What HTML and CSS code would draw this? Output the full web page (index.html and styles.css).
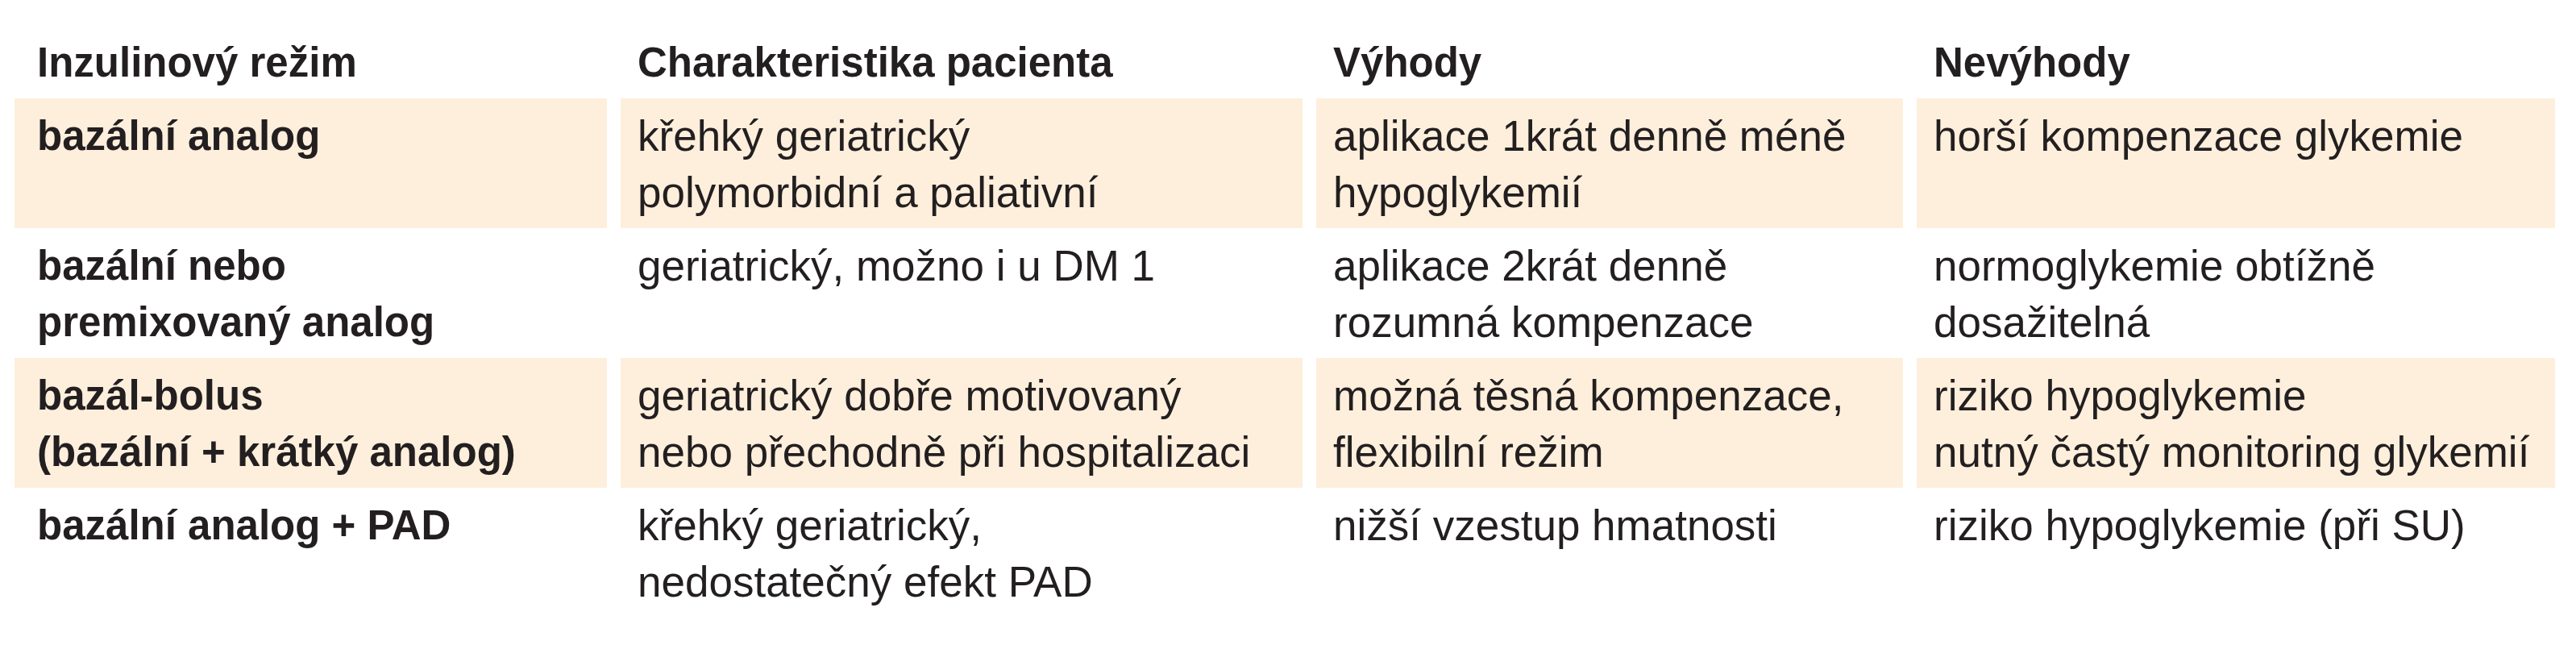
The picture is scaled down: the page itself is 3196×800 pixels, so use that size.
FILE: index.html
```html
<!DOCTYPE html>
<html lang="cs">
<head>
<meta charset="utf-8">
<title>Inzulinové režimy</title>
<link rel="stylesheet" href="styles.css">
</head>
<body>
<table class="regimes">
  <colgroup>
    <col class="c1"><col class="c2"><col class="c3"><col class="c4">
  </colgroup>
  <thead>
    <tr>
      <th class="first">Inzulinový režim</th>
      <th>Charakteristika pacienta</th>
      <th>Výhody</th>
      <th>Nevýhody</th>
    </tr>
  </thead>
  <tbody>
    <tr class="hl">
      <td class="first">bazální analog</td>
      <td>křehký geriatrický<br>polymorbidní a paliativní</td>
      <td>aplikace 1krát denně méně<br>hypoglykemií</td>
      <td>horší kompenzace glykemie</td>
    </tr>
    <tr>
      <td class="first">bazální nebo<br>premixovaný analog</td>
      <td>geriatrický, možno i u DM 1</td>
      <td>aplikace 2krát denně<br>rozumná kompenzace</td>
      <td>normoglykemie obtížně<br>dosažitelná</td>
    </tr>
    <tr class="hl">
      <td class="first">bazál-bolus<br>(bazální + krátký analog)</td>
      <td>geriatrický dobře motivovaný<br>nebo přechodně při hospitalizaci</td>
      <td>možná těsná kompenzace,<br>flexibilní režim</td>
      <td>riziko hypoglykemie<br>nutný častý monitoring glykemií</td>
    </tr>
    <tr>
      <td class="first">bazální analog + PAD</td>
      <td>křehký geriatrický,<br>nedostatečný efekt PAD</td>
      <td>nižší vzestup hmatnosti</td>
      <td>riziko hypoglykemie (při SU)</td>
    </tr>
  </tbody>
</table>
</body>
</html>
```
FILE: styles.css
```css
html, body {
  margin: 0;
  padding: 0;
  background: #ffffff;
}

body {
  font-family: "Liberation Sans", Arial, sans-serif;
  color: #231f20;
}

.regimes {
  margin: 31px 0 0 1px;
  border-collapse: separate;
  border-spacing: 17px 0;
  table-layout: fixed;
  width: 3186px;
}

.c1 { width: 735px; }
.c2 { width: 846px; }
.c3 { width: 728px; }
.c4 { width: 792px; }

.regimes th,
.regimes td {
  text-align: left;
  vertical-align: top;
  padding: 12px 21px 9px 21px;
  font-size: 53px;
  line-height: 70px;
  font-weight: normal;
  white-space: nowrap;
}

.regimes th,
.regimes td.first {
  font-weight: bold;
  font-size: 51px;
}

.regimes .first {
  padding-left: 28px;
}

.regimes tr.hl td {
  background: #fdefdc;
}
```
